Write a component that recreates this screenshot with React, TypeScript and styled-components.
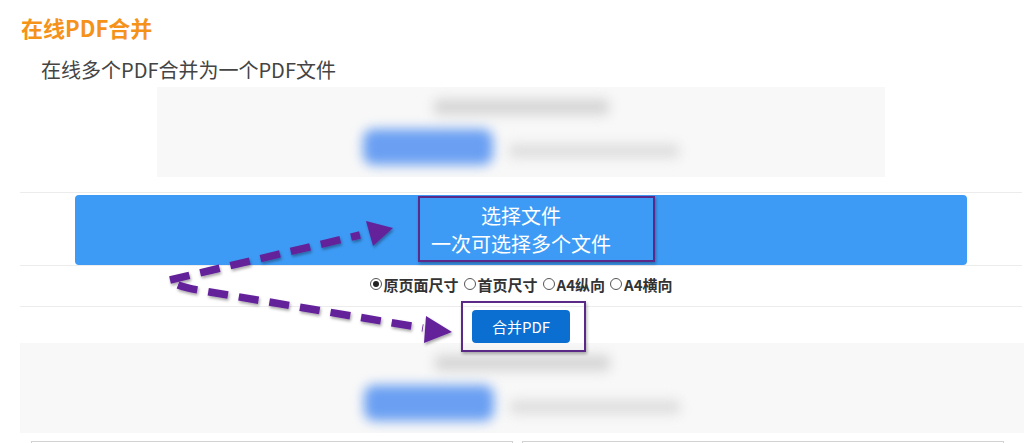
import React from 'react';
import styled, { createGlobalStyle } from 'styled-components';

const GlobalStyle = createGlobalStyle`
  html, body {
    margin: 0;
    padding: 0;
    background: #fff;
    overflow: hidden;
  }
  body {
    font-family: "Noto Sans CJK SC", "Noto Sans", sans-serif;
  }
`;

const radioOptions = [
  { label: '原页面尺寸', checked: true },
  { label: '首页尺寸', checked: false },
  { label: 'A4纵向', checked: false },
  { label: 'A4横向', checked: false },
];

const AdBlock: React.FC<{ wide?: boolean }> = ({ wide }) => (
  <AdBox $wide={wide}>
    <AdContent>
      <AdHeadline />
      <AdRow>
        <AdButton />
        <AdCaption />
      </AdRow>
    </AdContent>
  </AdBox>
);

const Arrows: React.FC = () => (
  <ArrowLayer width="1024" height="443" viewBox="0 0 1024 443">
    <defs>
      <filter id="arrowShadow" x="-10%" y="-30%" width="130%" height="160%">
        <feDropShadow dx="1" dy="2" stdDeviation="1.4" floodColor="#000" floodOpacity="0.35" />
      </filter>
    </defs>
    <g filter="url(#arrowShadow)" fill="#63239a" stroke="#63239a">
      <path d="M170 280 L360 235" fill="none" strokeWidth="7.5" strokeDasharray="20 11" />
      <polygon points="366,221 393,228 373,246" stroke="none" />
      <path d="M178 285 Q186 288 198 290 L423 328" fill="none" strokeWidth="7.5" strokeDasharray="20 11" />
      <polygon points="426,316 452,332 424,343" stroke="none" />
    </g>
  </ArrowLayer>
);

const App: React.FC = () => {
  return (
    <Page>
      <GlobalStyle />
      <Content>
        <Title>在线PDF合并</Title>
        <Subtitle>在线多个PDF合并为一个PDF文件</Subtitle>
        <AdBlock />
        <Table>
          <SelectRow>
            <SelectButton>
              <Highlight $inset="-6px -44px -4px -13px">
                <SelectLabel>
                  选择文件
                  <br />
                  一次可选择多个文件
                </SelectLabel>
              </Highlight>
            </SelectButton>
          </SelectRow>
          <OptionRow>
            {radioOptions.map((opt) => (
              <RadioOption key={opt.label}>
                <RadioMark $checked={opt.checked} />
                {opt.label}
              </RadioOption>
            ))}
          </OptionRow>
          <MergeRow>
            <Highlight $inset="-9px -16px -9px -11px">
              <MergeButton>合并PDF</MergeButton>
            </Highlight>
          </MergeRow>
        </Table>
        <AdBlock wide />
        <Panels>
          <Panel />
          <Panel />
        </Panels>
      </Content>
      <Arrows />
    </Page>
  );
};

const Page = styled.div`
  position: relative;
  width: 1024px;
  height: 443px;
  overflow: hidden;
`;

const Content = styled.div`
  padding: 0 2px 0 20px;
`;

const Title = styled.h1`
  margin: 12px 0 0 1px;
  font-size: 22px;
  line-height: 30px;
  font-weight: 700;
  color: #f5921a;
`;

const Subtitle = styled.p`
  margin: 14px 0 0 21px;
  font-size: 20px;
  line-height: 28px;
  color: #444;
`;

const AdBox = styled.div<{ $wide?: boolean }>`
  width: ${(p) => (p.$wide ? 'calc(100% + 2px)' : '728px')};
  height: 90px;
  margin: ${(p) => (p.$wide ? '0' : '3px auto 0')};
  background: #f8f8f8;
  overflow: hidden;
  display: flex;
  justify-content: center;
`;

const AdContent = styled.div`
  display: flex;
  flex-direction: column;
  align-items: center;
  padding-top: 12px;
  filter: blur(6px);
`;

const AdHeadline = styled.div`
  width: 175px;
  height: 16px;
  border-radius: 4px;
  background: #d6d6d6;
`;

const AdRow = styled.div`
  display: flex;
  align-items: center;
  gap: 16px;
  margin-top: 14px;
`;

const AdButton = styled.div`
  width: 130px;
  height: 36px;
  border-radius: 10px;
  background: #6a9ff2;
`;

const AdCaption = styled.div`
  width: 170px;
  height: 14px;
  margin-top: 8px;
  border-radius: 4px;
  background: #dedede;
`;

const Table = styled.div`
  margin-top: 15px;
`;

const Row = styled.div`
  display: flex;
  justify-content: center;
  border-top: 1px solid #ececec;
`;

const SelectRow = styled(Row)`
  padding-top: 2px;
`;

const SelectButton = styled.div`
  display: flex;
  justify-content: center;
  align-items: center;
  width: 892px;
  height: 70px;
  border-radius: 4px;
  background: #3d9bf5;
  color: #fff;
`;

const Highlight = styled.div<{ $inset: string }>`
  position: relative;

  &::after {
    content: '';
    position: absolute;
    inset: ${(p) => p.$inset};
    border: 2px solid #5b2a89;
    box-shadow: 1px 2px 3px rgba(0, 0, 0, 0.3);
    pointer-events: none;
    z-index: 2;
  }
`;

const SelectLabel = styled.div`
  width: 180px;
  font-size: 20px;
  line-height: 28px;
  text-align: center;
`;

const OptionRow = styled(Row)`
  align-items: center;
  box-sizing: border-box;
  height: 41px;
  padding-bottom: 4px;
  font-size: 15px;
  font-weight: 700;
  color: #333;
`;

const RadioOption = styled.label`
  display: inline-flex;
  align-items: center;
  margin-right: 5px;

  &:last-child {
    margin-right: 0;
  }
`;

const RadioMark = styled.span<{ $checked: boolean }>`
  display: inline-flex;
  justify-content: center;
  align-items: center;
  box-sizing: border-box;
  width: 12px;
  height: 12px;
  margin-right: 2px;
  border: 1px solid #555;
  border-radius: 50%;
  background: #fff;

  &::after {
    content: '';
    width: 6px;
    height: 6px;
    border-radius: 50%;
    background: ${(p) => (p.$checked ? '#222' : 'transparent')};
  }
`;

const MergeRow = styled(Row)`
  padding-top: 3px;
`;

const MergeButton = styled.button`
  display: block;
  width: 98px;
  height: 33px;
  padding: 0;
  border: none;
  border-radius: 4px;
  background: #0a6fd0;
  color: #fff;
  font-family: inherit;
  font-size: 15px;
`;

const Panels = styled.div`
  display: grid;
  grid-template-columns: 1fr 1fr;
  gap: 9px;
  margin: 8px 18px 0 11px;
`;

const Panel = styled.div`
  height: 60px;
  border: 1px solid #d2d2d2;
`;

const ArrowLayer = styled.svg`
  position: absolute;
  top: 0;
  left: 0;
  pointer-events: none;
  z-index: 3;
`;

export default App;
